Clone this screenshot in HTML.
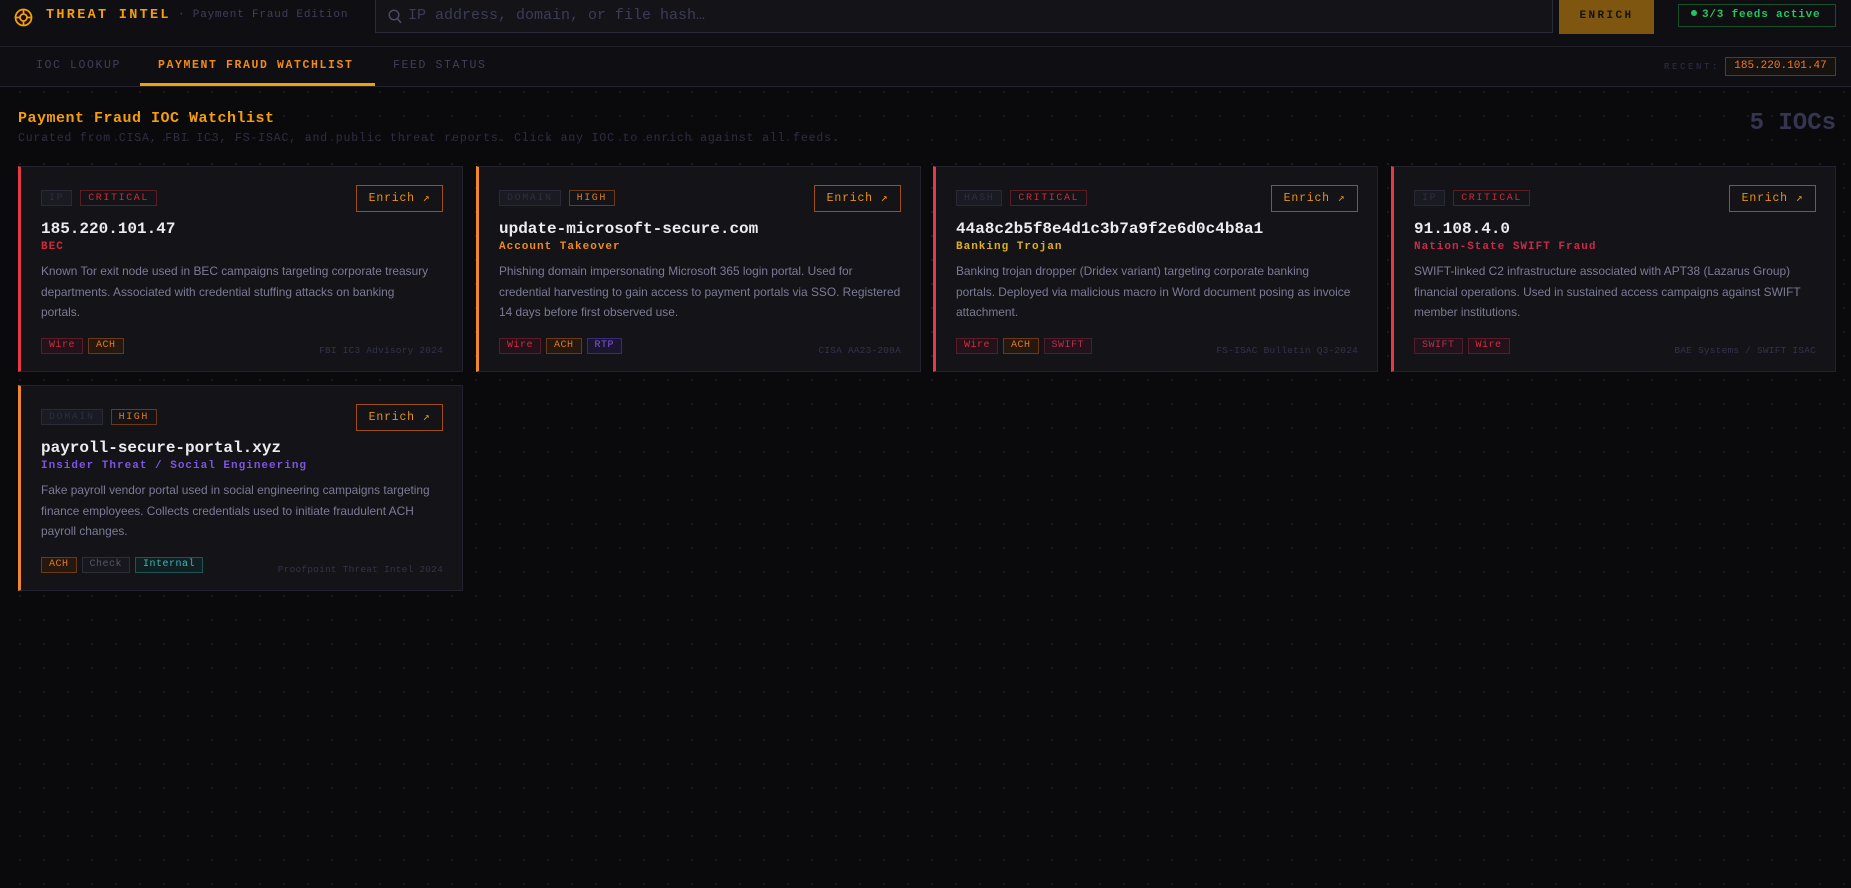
<!DOCTYPE html>
<html><head><meta charset="utf-8"><style>
*{box-sizing:border-box;margin:0;padding:0}
body{width:1851px;height:888px;overflow:hidden;background:#0a0a0d;font-family:"Liberation Mono",monospace;color:#ddd;position:relative;
background-image:radial-gradient(circle,#1c1c22 1px,transparent 1.2px);background-size:24px 24px;background-position:8px 8px}
.hdr{position:absolute;left:0;top:0;width:1851px;height:47px;background:#0f0f13;border-bottom:1px solid #202029}
.nav{position:absolute;left:0;top:47px;width:1851px;height:40px;background:#0f0f13;border-bottom:1px solid #24242e}
.abs{position:absolute;white-space:nowrap}
.tab{position:absolute;top:12px;font-size:11.5px;letter-spacing:1.6px;color:#3e3e58}
.card{position:absolute;width:445px;height:206px;background:#131318;border:1px solid #23232d;border-left:3px solid #e53946}
.card.o{border-left-color:#f0872a}
.tg{position:absolute;top:23px;left:20px;display:flex;gap:8px}
.t{font-size:10px;letter-spacing:1.6px;padding:1px 7px;height:16px;line-height:13px;border:1px solid}
.ty{color:#2e2e3e;border-color:#2a2a36;background:#1a1a22}
.cr{color:#d1293a;border-color:#5a1d26}
.hi{color:#e07b22;border-color:#6a3a16}
.btn{position:absolute;top:18px;right:19px;width:87px;height:27px;border:1px solid #a04e12;color:#e8930f;font-size:11.5px;letter-spacing:.8px;text-align:center;line-height:25px}
.ioc{position:absolute;left:20px;top:53px;font-size:16px;font-weight:bold;color:#ecebef}
.sub{position:absolute;left:20px;top:74px;font-size:11px;letter-spacing:1px;font-weight:bold}
.d{position:absolute;left:20px;top:94px;white-space:nowrap;font-family:"Liberation Sans",sans-serif;font-size:11.9px;line-height:20.7px;color:#7c7b95}
.bt{position:absolute;left:20px;top:171px;display:flex;gap:5px}
.b{font-size:10px;height:16px;line-height:14px;padding:0 7px;border:1px solid;letter-spacing:.5px}
.w{color:#d32c3c;border-color:#5a1c26;background:#24121a}
.a{color:#e07b22;border-color:#6a3a16;background:#26170f}
.r{color:#7d5ad8;border-color:#3c2a78;background:#1b1530}
.s{color:#b8304a;border-color:#4e1d2c;background:#22121b}
.c{color:#55556a;border-color:#2e2e3a;background:#17171d}
.i{color:#3fb8b8;border-color:#1f5457;background:#0f1f22}
.src{position:absolute;right:19px;top:178px;font-size:9.5px;letter-spacing:.2px;color:#33334a}
</style></head><body>
<div class="hdr">
<svg class="abs" style="left:14px;top:8px" width="19" height="19" viewBox="0 0 19 19"><circle cx="9.5" cy="9.5" r="8" fill="none" stroke="#f59e0b" stroke-width="1.8"/><circle cx="9.5" cy="9.5" r="3.5" fill="none" stroke="#f59e0b" stroke-width="1.8"/><path d="M9.5 1v5M9.5 13v5M1 9.5h5M13 9.5h5" stroke="#f59e0b" stroke-width="1.8"/></svg>
<div class="abs" style="left:46px;top:8px;font-size:13.5px;font-weight:bold;letter-spacing:2.3px;color:#f59e0b">THREAT INTEL</div>
<div class="abs" style="left:178px;top:9px;font-size:11px;letter-spacing:.8px;color:#3e3e58">· Payment Fraud Edition</div>
<div class="abs" style="left:375px;top:-1px;width:1178px;height:34px;border:1px solid #2a2a38;background:#131318"></div>
<svg class="abs" style="left:388px;top:9px" width="14" height="15" viewBox="0 0 14 15"><circle cx="6" cy="6" r="4.8" fill="none" stroke="#4a4a66" stroke-width="1.5"/><path d="M9.5 9.8l3.5 4" stroke="#4a4a66" stroke-width="1.6"/></svg>
<div class="abs" style="left:408px;top:7px;font-size:15px;color:#3c3c56">IP address, domain, or file hash…</div>
<div class="abs" style="left:1559px;top:0;width:95px;height:34px;background:#7f560f;color:#17130b;font-size:11px;font-weight:bold;letter-spacing:2.4px;text-align:center;line-height:32px">ENRICH</div>
<div class="abs" style="left:1678px;top:4px;width:158px;height:23px;border:1px solid #15522c;color:#22c55e;font-size:11px;font-weight:bold;letter-spacing:.8px;line-height:21px;padding-left:12px"><span style="display:inline-block;width:6px;height:6px;border-radius:3px;background:#22c55e;margin-right:5px;vertical-align:1px"></span>3/3 feeds active</div>
</div>
<div class="nav">
<div class="tab" style="left:36px">IOC LOOKUP</div>
<div class="tab" style="left:158px;color:#f08a1a;font-weight:bold">PAYMENT FRAUD WATCHLIST</div>
<div class="abs" style="left:140px;top:36px;width:235px;height:3px;background:#f59e0b"></div>
<div class="tab" style="left:393px">FEED STATUS</div>
<div class="abs" style="left:1664px;top:15px;font-size:9px;letter-spacing:2.6px;color:#2e2e48">RECENT:</div>
<div class="abs" style="left:1725px;top:10px;width:111px;height:19px;border:1px solid #5a3a22;background:#16120f;color:#f07a2a;font-size:11px;text-align:center;line-height:17px">185.220.101.47</div>
</div>
<div class="abs" style="left:18px;top:110px;font-size:15px;font-weight:bold;color:#f59e0b;letter-spacing:.5px">Payment Fraud IOC Watchlist</div>
<div class="abs" style="left:18px;top:132px;font-size:11.5px;color:#2e2e42;letter-spacing:.85px">Curated from CISA, FBI IC3, FS-ISAC, and public threat reports. Click any IOC to enrich against all feeds.</div>
<div class="abs" style="right:15px;top:110px;font-size:24px;font-weight:bold;color:#35354f">5 IOCs</div>

<div class="card" style="left:18px;top:166px">
<div class="tg"><span class="t ty">IP</span><span class="t cr">CRITICAL</span></div><div class="btn">Enrich ↗</div>
<div class="ioc">185.220.101.47</div><div class="sub" style="color:#d1293a">BEC</div>
<div class="d">Known Tor exit node used in BEC campaigns targeting corporate treasury<br>departments. Associated with credential stuffing attacks on banking<br>portals.</div>
<div class="bt"><span class="b w">Wire</span><span class="b a">ACH</span></div><div class="src">FBI IC3 Advisory 2024</div></div>

<div class="card o" style="left:476px;top:166px">
<div class="tg"><span class="t ty">DOMAIN</span><span class="t hi">HIGH</span></div><div class="btn">Enrich ↗</div>
<div class="ioc">update-microsoft-secure.com</div><div class="sub" style="color:#f08a1a">Account Takeover</div>
<div class="d">Phishing domain impersonating Microsoft 365 login portal. Used for<br>credential harvesting to gain access to payment portals via SSO. Registered<br>14 days before first observed use.</div>
<div class="bt"><span class="b w">Wire</span><span class="b a">ACH</span><span class="b r">RTP</span></div><div class="src">CISA AA23-208A</div></div>

<div class="card" style="left:933px;top:166px">
<div class="tg"><span class="t ty">HASH</span><span class="t cr">CRITICAL</span></div><div class="btn">Enrich ↗</div>
<div class="ioc">44a8c2b5f8e4d1c3b7a9f2e6d0c4b8a1</div><div class="sub" style="color:#e0b020">Banking Trojan</div>
<div class="d">Banking trojan dropper (Dridex variant) targeting corporate banking<br>portals. Deployed via malicious macro in Word document posing as invoice<br>attachment.</div>
<div class="bt"><span class="b w">Wire</span><span class="b a">ACH</span><span class="b s">SWIFT</span></div><div class="src">FS-ISAC Bulletin Q3-2024</div></div>

<div class="card" style="left:1391px;top:166px">
<div class="tg"><span class="t ty">IP</span><span class="t cr">CRITICAL</span></div><div class="btn">Enrich ↗</div>
<div class="ioc">91.108.4.0</div><div class="sub" style="color:#c92a48">Nation-State SWIFT Fraud</div>
<div class="d">SWIFT-linked C2 infrastructure associated with APT38 (Lazarus Group)<br>financial operations. Used in sustained access campaigns against SWIFT<br>member institutions.</div>
<div class="bt"><span class="b s">SWIFT</span><span class="b w">Wire</span></div><div class="src">BAE Systems / SWIFT ISAC</div></div>

<div class="card o" style="left:18px;top:385px">
<div class="tg"><span class="t ty">DOMAIN</span><span class="t hi">HIGH</span></div><div class="btn">Enrich ↗</div>
<div class="ioc">payroll-secure-portal.xyz</div><div class="sub" style="color:#7d55e0">Insider Threat / Social Engineering</div>
<div class="d">Fake payroll vendor portal used in social engineering campaigns targeting<br>finance employees. Collects credentials used to initiate fraudulent ACH<br>payroll changes.</div>
<div class="bt"><span class="b a">ACH</span><span class="b c">Check</span><span class="b i">Internal</span></div><div class="src">Proofpoint Threat Intel 2024</div></div>
</body></html>
